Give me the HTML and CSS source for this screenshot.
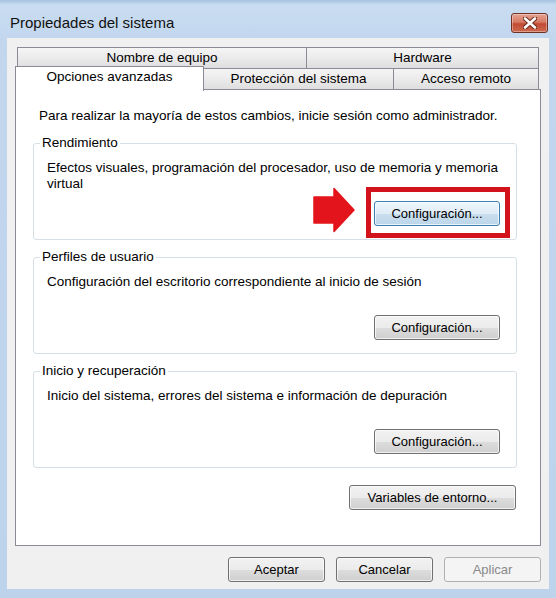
FILE: index.html
```html
<!DOCTYPE html>
<html lang="es">
<head>
    <meta charset="UTF-8">
    <meta name="viewport" content="width=device-width, initial-scale=1.0">
    <title>Propiedades del sistema</title>
    <link rel="stylesheet" href="styles.css">
</head>
<body>
    <div class="window">
        <div class="titlebar">
            <span class="title">Propiedades del sistema</span>
            <button class="close-btn" aria-label="Cerrar">
                <svg width="14" height="12" viewBox="0 0 14 12">
                    <path d="M2 1.5 L12 10.5 M12 1.5 L2 10.5" stroke="#6b2a1e" stroke-width="4.6" stroke-linecap="round"/>
                    <path d="M2 1.5 L12 10.5 M12 1.5 L2 10.5" stroke="#ffffff" stroke-width="2.6" stroke-linecap="round"/>
                </svg>
            </button>
        </div>

        <div class="client">
            <div class="tab-row">
                <div class="tab tab-nombre">Nombre de equipo</div>
                <div class="tab tab-fill">Hardware</div>
            </div>
            <div class="tab-row tab-row-front">
                <div class="tab tab-opciones active">Opciones avanzadas</div>
                <div class="tab tab-proteccion">Protección del sistema</div>
                <div class="tab tab-fill">Acceso remoto</div>
            </div>

            <div class="panel">
                <p class="intro">Para realizar la mayoría de estos cambios, inicie sesión como administrador.</p>

                <fieldset class="group">
                    <legend>Rendimiento</legend>
                    <div class="group-body">
                        <p>Efectos visuales, programación del procesador, uso de memoria y memoria<br>virtual</p>
                        <span class="highlight">
                            <svg class="arrow" width="42" height="46" viewBox="0 0 42 46">
                                <path d="M1 10 H21 V1.5 L41 23 L21 44.5 V36 H1 Z" fill="#e3141b" stroke="#e3141b" stroke-width="1.5" stroke-linejoin="round"/>
                            </svg>
                            <button class="btn btn-default">Configuración...</button>
                        </span>
                    </div>
                </fieldset>

                <fieldset class="group">
                    <legend>Perfiles de usuario</legend>
                    <div class="group-body">
                        <p>Configuración del escritorio correspondiente al inicio de sesión</p>
                        <button class="btn">Configuración...</button>
                    </div>
                </fieldset>

                <fieldset class="group">
                    <legend>Inicio y recuperación</legend>
                    <div class="group-body">
                        <p>Inicio del sistema, errores del sistema e información de depuración</p>
                        <button class="btn">Configuración...</button>
                    </div>
                </fieldset>

                <div class="panel-actions">
                    <button class="btn btn-env">Variables de entorno...</button>
                </div>
            </div>

            <div class="dialog-actions">
                <button class="btn btn-dialog">Aceptar</button>
                <button class="btn btn-dialog">Cancelar</button>
                <button class="btn btn-dialog" disabled>Aplicar</button>
            </div>
        </div>
    </div>
</body>
</html>
```

FILE: styles.css
```css
body {
    margin: 0;
    font-family: "Liberation Sans", Arial, sans-serif;
    font-size: 13.5px;
    color: #000;
    background-color: #bcd2eb;
}
p {
    margin: 0;
}
.window {
    width: 556px;
    height: 598px;
    background: linear-gradient(to bottom, #a6c1e1 0, #c9dcf1 5px, #c2d7ee 38px, #bdd3ec 100%);
}
.titlebar {
    height: 38px;
    box-sizing: border-box;
    padding: 8px 8px 0 10px;
    display: flex;
    align-items: center;
}
.title {
    font-size: 15px;
    line-height: 18px;
    color: #111;
}
.close-btn {
    margin-left: auto;
    width: 37px;
    height: 20px;
    padding: 0;
    border: 1px solid #6e3226;
    border-radius: 3px;
    background: linear-gradient(to bottom, #e5a291 0%, #d67b64 45%, #c34a32 55%, #cd6a4f 100%);
    box-shadow: inset 0 0 0 1px rgba(255, 255, 255, 0.35);
    display: flex;
    align-items: center;
    justify-content: center;
}
.client {
    margin: 0 7px;
    padding: 9px 8px 7px 8px;
    background-color: #f0f0f0;
}
.tab-row {
    display: flex;
    height: 22px;
    padding: 0 2px;
}
.tab-row-front {
    margin-top: -1px;
}
.tab {
    box-sizing: border-box;
    height: 22px;
    margin-left: -1px;
    border: 1px solid #898c95;
    background: linear-gradient(to bottom, #f5f5f5 0%, #ebebeb 50%, #dedede 100%);
    text-align: center;
    line-height: 20px;
    white-space: nowrap;
}
.tab-nombre {
    margin-left: 0;
    flex: 0 0 290px;
}
.tab-opciones {
    flex: 0 0 189px;
}
.tab-proteccion {
    flex: 0 0 191px;
}
.tab-fill {
    flex: 1;
}
.tab.active {
    position: relative;
    z-index: 1;
    margin-left: -2px;
    margin-top: -2px;
    height: 25px;
    border-bottom: none;
    background: #fff;
}
.panel {
    margin-top: -1px;
    border: 1px solid #898c95;
    background-color: #fff;
    padding: 18px 23px 35px 17px;
}
.intro {
    line-height: 16px;
    margin-left: 6px;
}
.group {
    margin: 11px 0 0 0;
    border: 1px solid #d5dfe5;
    border-radius: 3px;
    padding: 9px 16px 13px 13px;
}
.group + .group {
    margin-top: 9px;
}
.group legend {
    padding: 0 2px;
    margin-left: -7px;
    line-height: 16px;
}
.group-body {
    min-height: 66px;
    display: flex;
    flex-direction: column;
    line-height: 16px;
}
.group-body .btn,
.group-body .highlight {
    margin-top: auto;
    align-self: flex-end;
}
.highlight {
    position: relative;
    display: flex;
}
.highlight::after {
    content: "";
    position: absolute;
    top: -14px;
    bottom: -12px;
    left: -8px;
    right: -10px;
    border: 5px solid #d3131c;
}
.arrow {
    position: absolute;
    left: -61px;
    top: -14px;
}
.btn {
    box-sizing: border-box;
    height: 25px;
    width: 126px;
    padding: 0;
    font-family: inherit;
    font-size: 13px;
    color: #000;
    border: 1px solid #707070;
    border-radius: 3px;
    background: linear-gradient(to bottom, #f2f2f2 0%, #ebebeb 50%, #dddddd 51%, #cfcfcf 100%);
    box-shadow: inset 0 0 0 1px rgba(255, 255, 255, 0.7);
}
.btn-default {
    border-color: #3c7fb1;
    background: linear-gradient(to bottom, #eef6fc 0%, #dfecf6 50%, #cadfee 51%, #bcd5e9 100%);
}
.btn:disabled {
    color: #8a8a8a;
    border-color: #adb2b5;
    background: #f4f4f4;
    box-shadow: none;
}
.panel-actions {
    margin-top: 17px;
    display: flex;
    justify-content: flex-end;
    padding-right: 1px;
}
.btn-env {
    width: 167px;
}
.dialog-actions {
    margin-top: 11px;
    display: flex;
    justify-content: flex-end;
    gap: 11px;
}
.btn-dialog {
    width: 97px;
}
```
